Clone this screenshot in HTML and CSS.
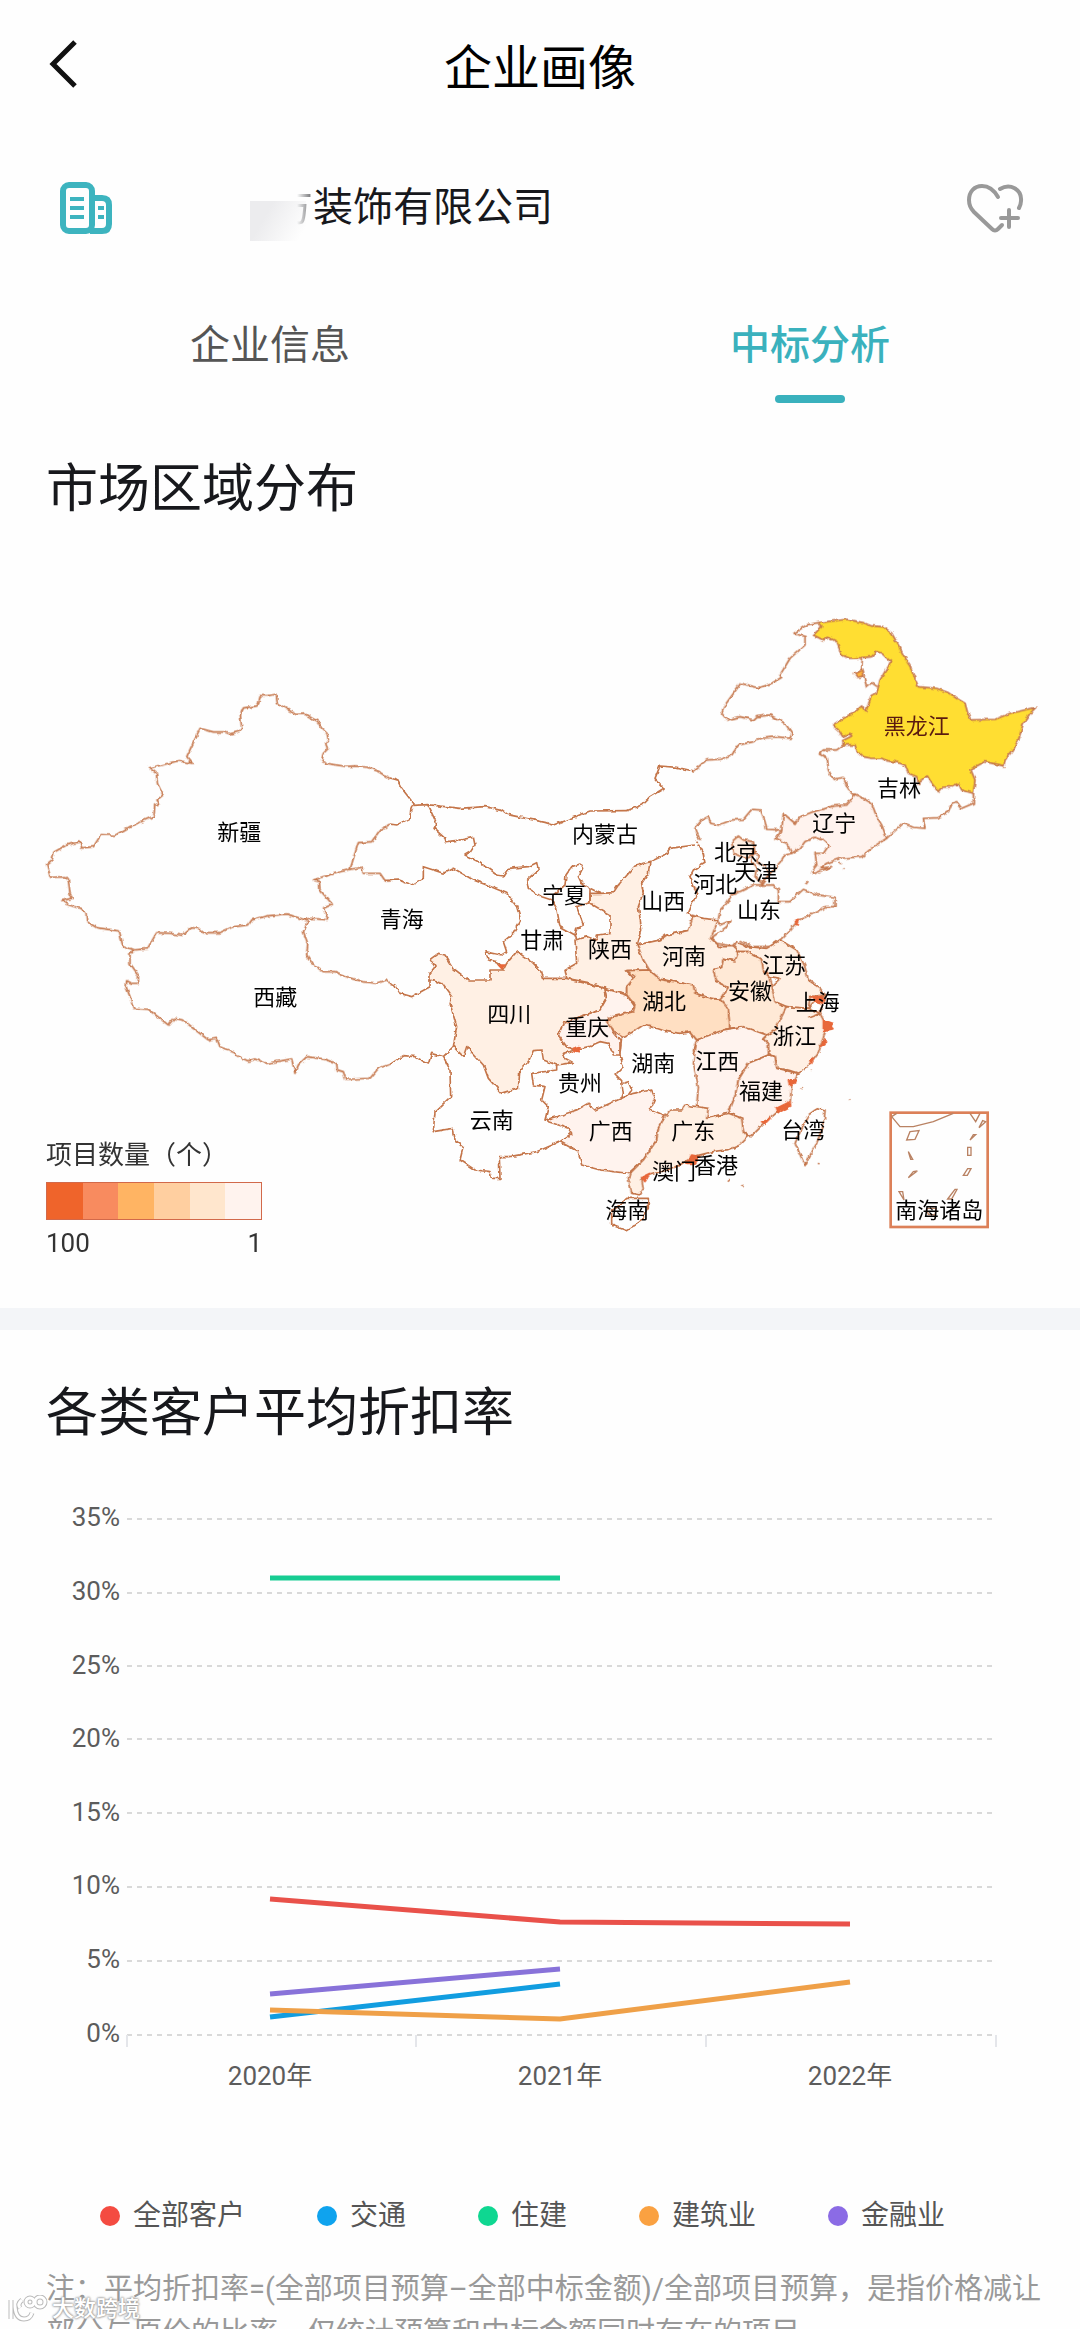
FILE: index.html
```html
<!DOCTYPE html>
<html lang="zh-CN">
<head>
    <meta charset="UTF-8">
    <meta name="viewport" content="width=device-width, initial-scale=1.0">
    <title>企业画像</title>
    <link rel="stylesheet" href="styles.css">
</head>
<body>
    <div class="page">
        <header class="topbar">
            <button class="icon-btn back" aria-label="返回">
                <svg width="32" height="52" viewBox="0 0 32 52"><path d="M29 4 7 26l22 22" fill="none" stroke="#111" stroke-width="5"/></svg>
            </button>
            <h1>企业画像</h1>
        </header>

        <div class="company">
            <svg class="company-icon" width="52" height="52" viewBox="0 0 52 52" fill="none" stroke="#3db4bf">
                <rect x="3" y="3" width="29" height="46" rx="6" stroke-width="6"/>
                <path d="M33 16h9q7 0 7 7v19q0 7-7 7H30" stroke-width="6"/>
                <path d="M10 17h14M10 26h14M10 35h14M38 26h6M38 35h6" stroke-width="4"/>
            </svg>
            <p class="company-name"><span class="hidden-name"></span><span class="faded">方</span>装饰有限公司</p>
            <button class="icon-btn" aria-label="收藏">
                <svg width="58" height="50" viewBox="0 0 58 50" fill="none" stroke="#999" stroke-width="4" stroke-linecap="round" stroke-linejoin="round">
                    <path d="M32 14C28 7 22 3 16 3C8 3 3 9 3 17c0 6 2 9 5 12l18 17q3 3 6 0l4-4"/>
                    <path d="M34 6c10-6 22 0 21 12 0 3-1 5-2 7"/>
                    <path d="M43 27v17M35 35h17"/>
                </svg>
            </button>
        </div>

        <nav class="tabs">
            <button class="tab">企业信息</button>
            <button class="tab active">中标分析</button>
        </nav>

        <section class="region">
            <h2>市场区域分布</h2>
            <div class="map-box">
                <svg class="map" viewBox="0 1770 3240 1980">
                    <defs>
                        <filter id="coast" filterUnits="userSpaceOnUse" x="0" y="1770" width="3240" height="1980">
                            <feTurbulence type="fractalNoise" baseFrequency="0.06" numOctaves="2" seed="4"/>
                            <feDisplacementMap in="SourceGraphic" scale="12" xChannelSelector="R" yChannelSelector="G"/>
                        </filter>
                    </defs>

                    <g class="land" filter="url(#coast)">
                        <!-- 西部 -->
                        <g transform="translate(90 1980)">
                            <path d="M1080 356L1045 335 1015 322 975 318 945 319 915 314 885 310 876 295 880 280 892 268 887 250 895 240 891 220 875 205 862 183 845 174 825 162 800 163 775 150 742 130 738 103 715 107 690 107 686 130 680 138 640 144 631 165 635 205 628 214 600 222 585 216 550 216 510 205 470 290 487 310 445 302 380 319 358 324 379 340 382 370 399 405 381 420 388 430 374 435 372 468 300 500 255 526 213 524 190 560 155 564 150 546 112 554 72 576 66 600 50 613 62 652 105 650 115 660 120 700 127 715 96 722 110 733 150 745 168 760 170 785 200 803 268 813 278 857 312 870 352 866 380 818 420 820 455 826 482 803 505 805 520 818 570 818 610 800 655 795 665 780 710 768 770 762 820 778 845 775 895 780 880 745 907 733 870 690 868 665 850 660 880 650 960 628 985 548 1025 545 1050 510 1080 492"/>
                            <path d="M960 628L995 622 1000 640 1050 640 1065 662 1080 662"/>
                            <path d="M820 778L835 785 820 815 833 850 830 885 850 915 880 935 915 935 950 950 1000 965 1040 970 1070 960 1080 970"/>
                            <path d="M312 870L300 880 300 910 325 945 325 970 305 970 290 962 288 980 300 1010 310 1045 355 1048 415 1095 432 1075 460 1080 490 1105 535 1140 560 1135 570 1160 610 1175 620 1187 655 1203 675 1197 710 1210 785 1197 795 1240 805 1215 830 1190 880 1197 920 1210 922 1230 940 1235 947 1258 1020 1255 1045 1225 1080 1213"/>
                        </g>

                        <!-- 中部 -->
                        <g transform="translate(1080 2280)">
                            <path class="lv2" d="M690 400L720 400 760 398 775 375 825 318 870 305 865 340 845 370 850 400 835 440 845 510 832 555 850 600 868 630 800 632 825 660 800 680 800 705 735 685 685 668 620 655 615 630 650 610 645 540 685 530 710 540 712 525 750 520 750 465 690 430Z"/>
                            <path class="lv2" d="M235 580L255 585 280 625 325 660 390 660 390 630 430 630 440 610 470 575 515 605 545 635 550 655 600 655 620 655 735 685 740 715 720 750 660 770 610 790 595 825 620 860 645 870 610 880 615 895 640 908 590 915 550 900 545 870 520 872 505 905 480 930 475 985 425 1000 385 955 370 915 320 860 310 890 280 860 290 800 270 730 275 710 245 670 210 660 210 640 225 620 210 598Z"/>
                            <path class="lv1" d="M735 685L800 705 825 740 800 765 745 775 760 815 780 840 780 885 760 885 745 850 720 845 685 860 645 870 620 860 595 825 610 790 660 770 720 750 740 715Z"/>
                            <path class="lv1" d="M555 1080L590 1070 650 1050 685 1030 705 1050 785 1015 820 1000 875 990 885 1015 870 1050 915 1070 895 1105 890 1140 850 1200 805 1240 720 1230 665 1215 655 1175 600 1145 635 1120 625 1105 565 1085Z"/>
                            <path d="M90 54L112 60 125 85 160 130 152 150 150 175 110 195 90 192"/>
                            <path d="M160 136L203 134 300 145 375 140 425 152 440 163 555 187 580 195 690 153 800 152 845 135 870 110 912 85 885 55 900 18 950 22 1000 33"/>
                            <path d="M203 134L230 190 222 205 255 235 258 245 300 240 340 232 345 255 332 275 315 285 355 305 410 345 430 348 445 325 505 320 530 308 535 330 500 360 505 385 545 410 575 420 590 445 600 500 645 525 650 505 670 495 650 440 690 425 690 385 665 370 655 350 668 325 660 312 635 320 618 345 615 375 580 405"/>
                            <path d="M645 525L650 540M690 385L720 400M870 305L915 285 930 265 1005 255"/>
                            <path d="M1010 245L1030 280 1035 310 1000 330 990 350 1010 400 985 460 998 470 990 510 920 525 900 540 832 555"/>
                            <path d="M75 362L115 360 155 375 190 355 190 320 250 340 280 325 340 360 380 375 440 400 470 440 482 480 460 520 430 545 440 575 425 585 375 575 385 600 410 605 430 630"/>
                            <path d="M90 670L105 675 120 700 155 710 210 680 210 660"/>
                            <path d="M90 913L130 887 165 890 205 912 215 880 250 890 280 860"/>
                            <path d="M250 890L270 930 272 1010 225 1055 220 1115 280 1105 285 1140 310 1160 300 1200 345 1230 390 1235 395 1255 420 1255 418 1190 450 1190 530 1175 600 1145"/>
                            <path d="M780 885L790 920 765 945 785 965 790 1000 785 1015M555 1080L565 1040 545 1020 555 980 520 975 515 940 590 930 590 915"/>
                            <path d="M780 880L785 835M790 970L805 965 815 990 805 1005"/>
                            <path d="M755 1350L780 1335 800 1315 865 1315 865 1345 840 1385 800 1412 755 1395Z"/>
                        </g>

                        <!-- 东北、华北 -->
                        <g transform="translate(2070 1770)">
                            <path d="M10 543L50 510 90 508 125 495 145 465 190 455 215 445 260 440 300 445 306 430 285 400 240 375 200 380 190 390 150 380 112 390 95 370 105 345 152 280 205 293 245 280 275 262 270 255 300 205 345 165 345 140 312 130 350 105 385 98"/>
                            <path class="top" d="M385 98L470 88 520 98 545 108 580 110 605 130 625 165 640 195 660 225 668 250 685 290 740 295 775 308 800 325 825 340 832 365 842 390 915 388 960 370 1038 352 1020 370 1000 400 985 450 965 485 945 510 942 528 885 515 842 538 855 570 850 610 815 600 805 580 785 590 755 592 745 605 725 580 712 558 685 580 680 560 655 550 645 525 615 515 590 512 575 505 545 505 520 500 500 480 495 465 460 465 458 452 485 438 480 430 458 440 445 420 428 405 460 385 490 370 515 348 527 365 545 315 560 310 565 290 570 270 602 215 575 190 560 185 545 200 515 203 480 205 455 195 440 155 415 142 400 150 370 135 395 110Z"/>
                            <path d="M517 203L515 240 530 290 545 278 562 290"/>
                            <path class="lv4" d="M493 250L518 240 523 258 502 262Z"/>
                            <path d="M460 465L440 480 400 480 388 492 412 505 415 540 430 568 460 562 475 600 495 615"/>
                            <path d="M850 610L850 640 815 655 800 635 785 640 775 665 745 683 700 685 705 715 670 712 640 700 590 745"/>
                            <path class="lv1" d="M495 612L525 628 545 640 560 680 575 705 590 745 550 770 515 800 450 805 410 820 390 835 425 830 375 850 365 850 372 835 380 825 375 790 400 790 417 765 400 750 375 742 345 755 330 775 305 790 290 760 258 745 275 720 280 670 315 700 325 683 370 665 430 648 470 645Z"/>
                            <path d="M275 720L230 718 225 695 212 660 185 658 160 688 125 690 85 705 62 700 55 680 35 690 15 715 30 750"/>
                            <path d="M305 790L285 795 270 820 240 850 215 885 190 885 150 905 125 915 110 940 90 960 85 990 50 990 5 975"/>
                            <path d="M215 885L250 885 265 900 265 935 300 935 340 898 385 915 435 922 435 950 405 950 385 965 350 980 325 990 300 1020 265 1055 240 1070 190 1070 150 1055 125 1068 80 1060 62 1045 110 1010 120 992 90 1005 85 990"/>
                            <path class="lv2" d="M125 755L145 738 160 750 190 755 195 790 165 805 130 790Z"/>
                            <path d="M190 785L205 795 200 815 225 830 240 850 215 880 195 860 200 830 185 815Z"/>
                            <path d="M355 873L345 885M448 815L452 822M460 836L464 838"/>
                        </g>

                        <!-- 华东、华南 -->
                        <g transform="translate(2040 2640)">
                            <path class="lv2" d="M-128 195L-60 180 -40 165 25 152 38 108 70 115 115 120 92 175 120 200 165 200 175 220 165 243 130 235 125 262 100 270 110 305 145 322 120 358 90 355 45 340 40 315 -60 298 -92 270 -110 240Z"/>
                            <path class="lv3" d="M-92 270L-160 272 -135 290 -160 320 -160 345 -135 375 -140 395 -200 410 -220 425 -195 455 -170 470 -140 455 -110 435 -70 445 -40 455 0 460 30 455 50 480 100 465 130 450 150 445 145 385 120 358 90 355 45 340 40 315 -60 298Z"/>
                            <path d="M30 455L50 480 40 510 50 550"/>
                            <path class="lv2" d="M165 185L205 200 260 205 300 180 350 210 375 260 385 300 420 325 435 345 405 360 385 385 340 385 320 380 285 365 275 320 300 295 270 290 250 270 245 240 205 215 175 215 160 200Z"/>
                            <path class="lv2b" d="M175 215L205 215 245 240 250 270 270 290 280 340 285 365 320 380 310 410 280 455 260 465 215 450 185 440 150 445 145 385 120 358 145 322 110 305 100 270 125 262 130 235 165 243Z"/>
                            <path class="lv2" d="M320 380L385 385 420 400 440 440 425 490 415 520 385 560 355 580 325 570 290 565 285 530 265 520 265 490 250 475 285 450Z"/>
                            <path class="lv1" d="M50 480L130 450 190 440 260 465 250 475 265 490 265 525 205 550 175 600 165 650 145 700 75 715 50 675 55 620 40 550Z"/>
                            <path class="lv1" d="M265 525L285 530 290 565 355 580 335 620 330 670 290 695 250 730 210 770 190 755 185 715 145 700 165 650 175 600 205 550Z"/>
                            <path class="lv2" d="M145 700L185 715 190 755 205 770 180 795 150 808 100 815 40 830 -10 860 -90 885 -115 895 -110 930 -120 945 -145 940 -155 895 -150 880 -110 840 -70 780 -65 745 -45 710 -30 690 5 690 15 675 85 685 80 715Z"/>
                            <path d="M385 385L390 350 435 345 420 400M385 415L425 400"/>
                            <path d="M435 690L415 683 385 705 365 745 345 790 375 857 388 830 410 790 432 730Z"/>
                            <path d="M508 658L510 660M414 850L418 852M145 900L150 905M185 915L190 922M362 625L365 627M392 570L395 572"/>
                            <path class="islands" d="M430 420L458 430 455 450 430 455ZM430 480L440 485 425 500ZM388 540L400 538 395 550ZM325 600L348 605 330 620ZM290 685L330 665 332 678 295 698ZM245 725L270 715 255 730ZM35 825L60 830 45 850 20 850ZM345 120L355 118 350 135ZM395 350L435 355 430 370 400 362ZM-115 892L-90 880 -105 905Z"/>
                        </g>
                        <path class="islands" d="M1720 3145L1740 3140 1735 3158 1722 3155ZM1495 2895L1515 2895 1505 2905Z"/>
                    </g>

                    <!-- 南海诸岛 -->
                    <g class="inset" transform="translate(2040 2640)">
                        <rect x="632" y="698" width="291" height="343"/>
                        <path d="M635 710L660 740 700 740 760 725 820 700M870 700L887 725 900 700M635 710L650 700"/>
                        <path d="M690 755L717 752 705 778 680 780ZM685 815L698 838 692 838ZM685 893L700 875 712 873ZM657 935L668 935 672 960ZM897 743L908 722 917 725ZM870 780L880 764 887 764ZM863 802H873V826H863ZM850 886L863 866 873 866 862 886ZM803 957L825 928 831 928 815 957ZM740 985L768 985 765 1005 745 1003Z"/>
                    </g>

                    <g class="labels">
                        <text x="718" y="2497">新疆</text>
                        <text x="826" y="2992">西藏</text>
                        <text x="1205" y="2758">青海</text>
                        <text x="1815" y="2503">内蒙古</text>
                        <text x="1692" y="2685">宁夏</text>
                        <text x="1627" y="2822">甘肃</text>
                        <text x="1830" y="2847">陕西</text>
                        <text x="1990" y="2705">山西</text>
                        <text x="2052" y="2870">河南</text>
                        <text x="1992" y="3005">湖北</text>
                        <text x="1528" y="3042">四川</text>
                        <text x="1762" y="3083">重庆</text>
                        <text x="1960" y="3190">湖南</text>
                        <text x="1740" y="3250">贵州</text>
                        <text x="1475" y="3360">云南</text>
                        <text x="1832" y="3395">广西</text>
                        <text x="2080" y="3395">广东</text>
                        <text x="2022" y="3515">澳门</text>
                        <text x="2148" y="3495">香港</text>
                        <text x="1882" y="3630">海南</text>
                        <text class="dark" x="2750" y="2180">黑龙江</text>
                        <text x="2697" y="2365">吉林</text>
                        <text x="2503" y="2470">辽宁</text>
                        <text x="2208" y="2557">北京</text>
                        <text x="2268" y="2618">天津</text>
                        <text x="2145" y="2653">河北</text>
                        <text x="2277" y="2730">山东</text>
                        <text x="2352" y="2895">江苏</text>
                        <text x="2250" y="2975">安徽</text>
                        <text x="2453" y="3008">上海</text>
                        <text x="2383" y="3110">浙江</text>
                        <text x="2152" y="3185">江西</text>
                        <text x="2283" y="3275">福建</text>
                        <text x="2410" y="3390">台湾</text>
                        <text x="2818" y="3630">南海诸岛</text>
                    </g>
                </svg>

                <div class="scale">
                    <p>项目数量（个）</p>
                    <div class="scale-bar">
                        <span class="s1"></span><span class="s2"></span><span class="s3"></span><span class="s4"></span><span class="s5"></span><span class="s6"></span>
                    </div>
                    <div class="scale-ends"><span>100</span><span>1</span></div>
                </div>
            </div>
        </section>

        <section class="discount">
            <h2>各类客户平均折扣率</h2>
            <svg class="chart" viewBox="0 0 1080 640">
                <g class="grid">
                    <path d="M127 39H996M127 113H996M127 186H996M127 259H996M127 333H996M127 407H996M127 481H996M127 555H996"/>
                </g>
                <path class="ticks" d="M127 555V567M416 555V567M706 555V567M996 555V567"/>
                <g class="y-axis">
                    <text x="120" y="37">35%</text>
                    <text x="120" y="111">30%</text>
                    <text x="120" y="185">25%</text>
                    <text x="120" y="258">20%</text>
                    <text x="120" y="332">15%</text>
                    <text x="120" y="405">10%</text>
                    <text x="120" y="479">5%</text>
                    <text x="120" y="553">0%</text>
                </g>
                <g class="x-axis">
                    <text x="270" y="596">2020年</text>
                    <text x="560" y="596">2021年</text>
                    <text x="850" y="596">2022年</text>
                </g>
                <g class="lines">
                    <path stroke="#e9514a" d="M270 419L560 442 850 444"/>
                    <path stroke="#119de0" d="M270 537L560 504"/>
                    <path stroke="#17cc92" d="M270 98H560"/>
                    <path stroke="#efa048" d="M270 530L560 539 850 502"/>
                    <path stroke="#8872d9" d="M270 514L560 489"/>
                </g>
            </svg>
            <ul class="legend">
                <li><i class="dot red"></i>全部客户</li>
                <li><i class="dot blue"></i>交通</li>
                <li><i class="dot green"></i>住建</li>
                <li><i class="dot orange"></i>建筑业</li>
                <li><i class="dot purple"></i>金融业</li>
            </ul>
            <p class="note">注：平均折扣率=(全部项目预算–全部中标金额)/全部项目预算，是指价格减让部分与原价的比率，仅统计预算和中标金额同时存在的项目</p>
        </section>

        <div class="watermark">
            <svg width="40" height="28" viewBox="0 0 40 28" fill="none">
                <g stroke="#bbb" stroke-width="5">
                    <path d="M3 5v19M7 12q1 12 9 12 6 0 8-6M14 5q-5 4-2 8"/>
                    <circle cx="22" cy="7" r="4"/><circle cx="32" cy="7" r="5"/>
                </g>
                <g stroke="#fff" stroke-width="3">
                    <path d="M3 5v19M7 12q1 12 9 12 6 0 8-6M14 5q-5 4-2 8"/>
                    <circle cx="22" cy="7" r="4"/><circle cx="32" cy="7" r="5"/>
                </g>
            </svg>
            <span>大数跨境</span>
        </div>
    </div>
</body>
</html>
```

FILE: styles.css
```css
* {
    box-sizing: border-box;
    margin: 0;
    padding: 0;
}

body {
    font-family: Roboto, "Noto Sans CJK SC", sans-serif;
    background-color: #fefefe;
    color: #17181c;
}

.page {
    position: relative;
    height: 100vh;
    overflow: hidden;
}

button {
    font-family: inherit;
    border: none;
    background: none;
    cursor: pointer;
}

.icon-btn {
    display: flex;
}

.topbar {
    display: flex;
    align-items: center;
    height: 128px;
    padding: 0 46px;
}

.topbar h1 {
    flex: 1;
    padding-right: 32px;
    text-align: center;
    font-size: 48px;
    font-weight: 400;
    color: #000;
}

.company {
    display: flex;
    align-items: center;
    height: 80px;
    margin-top: 40px;
    padding: 0 56px 0 60px;
}

.company-name {
    display: flex;
    align-items: center;
    flex: 1;
    padding-left: 138px;
    font-size: 40px;
    line-height: 60px;
}

.hidden-name {
    width: 56px;
    height: 40px;
    margin: 26px -33px 0 0;
    background: linear-gradient(120deg, #ececee 30%, #fefefe 90%);
}

.faded {
    -webkit-mask-image: linear-gradient(to right, transparent 60%, #000 120%);
    mask-image: linear-gradient(to right, transparent 60%, #000 120%);
}

.tabs {
    display: flex;
    margin-top: 58px;
}

.tab {
    flex: 1;
    padding-bottom: 18px;
    font-size: 40px;
    line-height: 80px;
    color: #555;
}

.tab::after {
    content: "";
    display: block;
    width: 70px;
    height: 8px;
    margin: 9px auto -18px;
    border-radius: 4px;
}

.tab.active {
    color: #3ab1bd;
    font-weight: 500;
}

.tab.active::after {
    background-color: #3ab1bd;
}

h2 {
    padding: 0 46px;
    font-size: 52px;
    font-weight: 400;
    line-height: 72px;
}

.region {
    padding: 51px 0 58px;
    border-bottom: 22px solid #f3f5f8;
}

.map-box {
    position: relative;
    margin-top: 64px;
}

.map,
.chart {
    display: block;
    width: 100%;
}

.land path {
    fill: none;
    stroke: #c4754a;
    stroke-width: 5;
    stroke-linejoin: round;
}

.land .lv1 { fill: #fff3ee; }
.land .lv2 { fill: #fff0e4; }
.land .lv2b { fill: #ffe9d6; }
.land .lv3 { fill: #ffdfc2; }
.land .lv4 { fill: #ffb43c; }
.land .top { fill: #ffde33; }
.land .islands { fill: #e8673a; stroke: #e8673a; }

.inset {
    fill: none;
    stroke: #b98263;
    stroke-width: 4;
}

.inset rect {
    stroke: #dc8058;
    stroke-width: 8;
}

.labels {
    font-size: 66px;
    text-anchor: middle;
    dominant-baseline: central;
    fill: #000;
}

.labels .dark {
    fill: #5a1a10;
}

.scale {
    position: absolute;
    left: 46px;
    bottom: -14px;
    width: 216px;
    font-size: 26px;
    line-height: 42px;
    color: #333;
    white-space: nowrap;
}

.scale-bar {
    display: flex;
    height: 38px;
    margin: 6px 0 2px;
    border: 1px solid #d2694a;
}

.scale-bar span {
    flex: 1;
}

.s1 { background-color: #ef642b; }
.s2 { background-color: #f88b5f; }
.s3 { background-color: #ffb463; }
.s4 { background-color: #ffcfa0; }
.s5 { background-color: #ffe6cd; }
.s6 { background-color: #fff3ee; }

.scale-ends {
    display: flex;
    justify-content: space-between;
}

.discount {
    padding-top: 48px;
}

.chart {
    margin-top: 30px;
    font-size: 26px;
    fill: #5c5c5c;
    dominant-baseline: central;
}

.grid path {
    stroke: #d9d9d9;
    stroke-width: 2;
    stroke-dasharray: 5 5;
}

.ticks {
    stroke: #e4e6ea;
    stroke-width: 2;
}

.y-axis {
    text-anchor: end;
}

.x-axis {
    text-anchor: middle;
}

.lines path {
    fill: none;
    stroke-width: 5;
}

.legend {
    display: flex;
    gap: 72px;
    margin-top: 76px;
    padding-left: 100px;
    list-style: none;
    font-size: 28px;
    line-height: 40px;
    color: #555;
}

.legend li {
    display: flex;
    align-items: center;
    gap: 13px;
}

.dot {
    width: 20px;
    height: 20px;
    border-radius: 50%;
}

.red { background-color: #f44b41; }
.blue { background-color: #0fa3ee; }
.green { background-color: #0fd791; }
.orange { background-color: #faa141; }
.purple { background-color: #8b6be5; }

.note {
    margin-top: 31px;
    padding: 0 24px 0 46px;
    font-size: 29px;
    line-height: 44px;
    color: #999;
}

.watermark {
    position: absolute;
    left: 8px;
    bottom: 4px;
    display: flex;
    align-items: center;
    gap: 4px;
    font-size: 22px;
    line-height: 32px;
    font-weight: 500;
    color: #fff;
    text-shadow: 0 0 2px #999, 0 0 2px #999, 0 0 3px #aaa;
}
```
